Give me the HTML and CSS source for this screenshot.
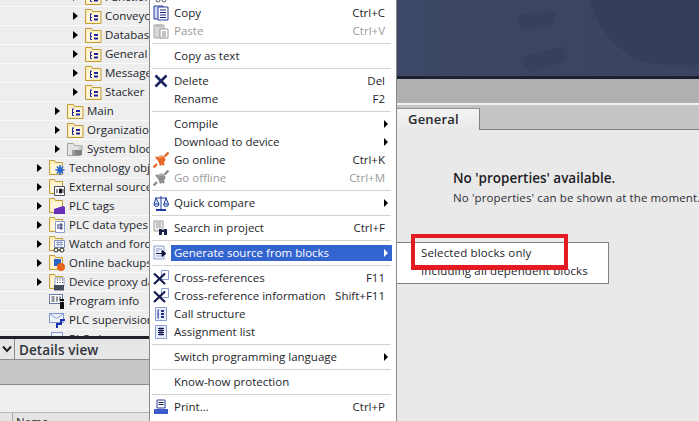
FILE: index.html
```html
<!DOCTYPE html>
<html lang="en">
<head>
<meta charset="utf-8">
<title>Generate source from blocks</title>
<link rel="stylesheet" href="styles.css">
</head>
<body>
<svg class="defs" width="0" height="0" aria-hidden="true">
  <symbol id="fold" viewBox="0 0 17 17">
    <path d="M.5 1.500h6l1 2h8.500v12H.5z" fill="#fdeebd" stroke="#c19b3c"/>
    <path d="M2 5h13v9H2z" fill="#fff6d8"/>
    <path d="M5.500 6v6.500H7M5.500 9.500H7M5 6h2" stroke="#22229c" fill="none"/>
    <rect x="9" y="7" width="4" height="2" fill="#22229c"/><rect x="9" y="10.500" width="4" height="2" fill="#22229c"/>
  </symbol>
  <symbol id="foldg" viewBox="0 0 17 17">
    <path d="M.5 2.500h6l1 2h6v10H.5z" fill="#e2e2e2" stroke="#a3a3a3"/>
    <path d="M5 9h5v6H5z" fill="#9d9d9d"/><rect x="8" y="9" width="7" height="5" fill="#7f7f7f"/><rect x="12" y="4" width="4" height="5" fill="#c4c4c4"/>
  </symbol>
  <symbol id="foldb" viewBox="0 0 17 17">
    <path d="M.5 .5h5l1 2h7v12H.5z" fill="#fdeebd" stroke="#c19b3c"/>
    <path d="M2 5l3-1h8v9H2z" fill="#fff6d8"/>
  </symbol>
  <symbol id="x" viewBox="0 0 14 14">
    <path d="M1.500 1.500 12.500 12.500M12.500 1.500 1.500 12.500" stroke="#1b2360" stroke-width="2.600"/>
  </symbol>
  <symbol id="xdoc" viewBox="0 0 16 16">
    <path d="M8.500 .5h7v9h-7z" fill="#fff" stroke="#8c9ed0"/>
    <path d="M1 3.500 12 14M12 3.500 1 14" stroke="#14194f" stroke-width="2.200"/>
  </symbol>
  <symbol id="plug" viewBox="0 0 16 16">
    <path d="M.5 15.500 4 12M11.500 4.500 15.500 .5" stroke="currentColor" stroke-width="2.400"/>
    <path d="M4 6c2-2 4-3 6-2s3 3 2 5-3 4-5 5z" fill="currentColor"/>
    <path d="M3 5 11 13" stroke="currentColor" stroke-width="2.400"/>
    <path d="M6 6c1.500-1 3-1.500 4-1" stroke="#fff" stroke-opacity=".55" fill="none"/>
  </symbol>
</svg>

<div class="app">
  <aside class="left">
    <div class="tree">
      <div class="row l3"><i class="tri"></i><svg class="ic"><use href="#fold"/></svg><span>Functions</span></div>
      <div class="row l3"><i class="tri"></i><svg class="ic"><use href="#fold"/></svg><span>Conveyor</span></div>
      <div class="row l3"><i class="tri"></i><svg class="ic"><use href="#fold"/></svg><span>Database</span></div>
      <div class="row l3"><i class="tri"></i><svg class="ic"><use href="#fold"/></svg><span>General</span></div>
      <div class="row l3"><i class="tri"></i><svg class="ic"><use href="#fold"/></svg><span>Messages</span></div>
      <div class="row l3"><i class="tri"></i><svg class="ic"><use href="#fold"/></svg><span>Stacker</span></div>
      <div class="row l2"><i class="tri"></i><svg class="ic"><use href="#fold"/></svg><span>Main</span></div>
      <div class="row l2"><i class="tri"></i><svg class="ic"><use href="#fold"/></svg><span>Organization blocks</span></div>
      <div class="row l2"><i class="tri"></i><svg class="ic"><use href="#foldg"/></svg><span>System blocks</span></div>
      <div class="row l1"><i class="tri"></i><svg class="ic" viewBox="0 0 17 17"><use href="#foldb" width="17" height="17"/><path d="M11 5v10M6.500 10h9M8 6.500l6 7M14 6.500l-6 7" stroke="#2a66cf" stroke-width="1.600"/><circle cx="11" cy="10" r="2.500" fill="#2a66cf"/></svg><span>Technology objects</span></div>
      <div class="row l1"><i class="tri"></i><svg class="ic" viewBox="0 0 17 17"><use href="#foldb" width="17" height="17"/><path d="M5.500 7.500h10v9h-10z" fill="#fff" stroke="#4a4f60"/><path d="M8 10v4M10.500 10h2v4h-2zM14 10v4" stroke="#20222c"/></svg><span>External source files</span></div>
      <div class="row l1"><i class="tri"></i><svg class="ic" viewBox="0 0 17 17"><use href="#foldb" width="17" height="17"/><path d="M5 11l9-3 2 1v7H5z" fill="#6a2fb8"/></svg><span>PLC tags</span></div>
      <div class="row l1"><i class="tri"></i><svg class="ic" viewBox="0 0 17 17"><use href="#foldb" width="17" height="17"/><path d="M6.500 4.500h9v11h-9z" fill="#fff" stroke="#8c9ed0"/><path d="M9 7v5M11 7h2v2h-2zM11 10h2v2h-2z" stroke="#2b3270" fill="none"/></svg><span>PLC data types</span></div>
      <div class="row l1"><i class="tri"></i><svg class="ic" viewBox="0 0 17 17"><use href="#foldb" width="17" height="17"/><path d="M5.500 4.500h10v7h-10z" fill="#fff" stroke="#7f8fbf"/><path d="M7 6.500h7M7 8.500h7M9 5v6M12 5v6" stroke="#8c9ed0"/><circle cx="7" cy="14" r="2" fill="#fff" stroke="#222"/><circle cx="13" cy="14" r="2" fill="#fff" stroke="#222"/><path d="M9 14h2" stroke="#222"/></svg><span>Watch and force tables</span></div>
      <div class="row l1"><i class="tri"></i><svg class="ic" viewBox="0 0 17 17"><use href="#foldb" width="17" height="17"/><rect x="5" y="4" width="7" height="7" fill="#2c63c9"/><circle cx="12" cy="12" r="4" fill="#e8641c"/></svg><span>Online backups</span></div>
      <div class="row l1"><i class="tri"></i><svg class="ic" viewBox="0 0 17 17"><use href="#foldb" width="17" height="17"/><path d="M6 4h9v8H6z" fill="#fff" stroke="#8c9ed0"/><path d="M8 6h1M10.500 6h1M13 6h1M8 8.500h1M10.500 8.500h1M13 8.500h1" stroke="#333"/><rect x="5" y="11" width="10" height="5.500" fill="#454c5c"/></svg><span>Device proxy data</span></div>
      <div class="row l1"><i class="tri none"></i>
        <svg class="ic" viewBox="0 0 17 17"><rect x=".5" y="1.500" width="13" height="9" fill="#fff" stroke="#6a78b0"/><path d="M2.500 4h3M2.500 6h3M2.500 8h3M8 3.500v5M11 3.500v5" stroke="#223"/><rect x="11" y="6" width="4" height="2" fill="#111"/><rect x="11" y="9" width="4" height="7" fill="#111"/></svg>
        <span>Program info</span></div>
      <div class="row l1"><i class="tri none"></i>
        <svg class="ic" viewBox="0 0 17 17"><path d="M.5 1.500h14v9H.5z" fill="#eef2fb" stroke="#7f96cf"/><path d="M.5 1.500l7 5 7-5" stroke="#7f96cf" fill="none"/><path d="M8 16v-4h4V8h4" stroke="#1c2fb0" stroke-width="2" fill="none"/></svg>
        <span>PLC supervisions</span></div>
      <div class="row l1"><i class="tri none"></i>
        <svg class="ic" viewBox="0 0 17 17"><path d="M2.500 1.500h11v13h-11z" fill="#eef2fb" stroke="#7f96cf"/></svg>
        <span>PLC alarms</span></div>
    </div>
    <section class="details">
      <header class="dhead">
        <span class="chev"><svg width="10" height="8" viewBox="0 0 10 8"><path d="M1 1.500 5 6l4-4.500" fill="none" stroke="#222" stroke-width="2"/></svg></span>
        <strong>Details view</strong>
      </header>
      <div class="dband"></div>
      <div class="dgap"></div>
      <div class="dtable"><span class="cut"></span><span class="name">Name</span></div>
    </section>
  </aside>

  <main class="right">
    <div class="banner">
      <svg class="mark" viewBox="0 0 302 76" aria-hidden="true">
        <path d="M193 0h110v65h-38c-35-3-62-28-72-65z" fill="#363f59"/>
        <path d="M121 14l38-3-2 13-12 4-22 1z" fill="#37405c"/>
        <path d="M121 58l45-12 3 15-34 12z" fill="#37405c"/>
      </svg>
    </div>
    <div class="band"></div>
    <div class="strip"><span class="tab">General</span></div>
    <div class="props">
      <h2>No 'properties' available.</h2>
      <p>No 'properties' can be shown at the moment.</p>
    </div>
  </main>
</div>

<nav class="menu">
  <div class="item cutrow"><span class="gl"><svg width="16" height="16" viewBox="0 0 16 16"><path d="M6 1 9 10M10 1 7 10" stroke="#5a5a6a"/><circle cx="5" cy="13" r="2" fill="#fff" stroke="#5a5a6a"/><circle cx="11" cy="13" r="2" fill="#fff" stroke="#5a5a6a"/></svg></span><span class="lb">Cut</span></div>
  <div class="item"><span class="gl"><svg width="16" height="16" viewBox="0 0 16 16"><path d="M1 1h9v13H1z" fill="#cfdcf5" stroke="#2c3f97"/><path d="M5 2h10v13H5z" fill="#fff" stroke="#2c3f97"/><path d="M7 5h6M7 7.500h6M7 10h6M7 12.500h6" stroke="#1a237a"/></svg></span><span class="lb">Copy</span><span class="key">Ctrl+C</span></div>
  <div class="item off"><span class="gl"><svg width="16" height="16" viewBox="0 0 16 16"><path d="M1 2h10v13H1z" fill="#d6d6d6" stroke="#a8a8a8"/><path d="M3 1h6v3H3z" fill="#bbb"/><path d="M7 6h8v9H7z" fill="#fff" stroke="#999"/><path d="M9 9h4M9 11h4M9 13h4" stroke="#888"/></svg></span><span class="lb">Paste</span><span class="key">Ctrl+V</span></div>
  <hr>
  <div class="item"><span class="gl"></span><span class="lb">Copy as text</span></div>
  <hr>
  <div class="item"><span class="gl"><svg width="14" height="14"><use href="#x"/></svg></span><span class="lb">Delete</span><span class="key">Del</span></div>
  <div class="item"><span class="gl"></span><span class="lb">Rename</span><span class="key">F2</span></div>
  <hr>
  <div class="item sub"><span class="gl"></span><span class="lb">Compile</span></div>
  <div class="item sub"><span class="gl"></span><span class="lb">Download to device</span></div>
  <div class="item"><span class="gl plug-on"><svg width="16" height="16"><use href="#plug"/></svg></span><span class="lb">Go online</span><span class="key">Ctrl+K</span></div>
  <div class="item off"><span class="gl plug-off"><svg width="16" height="16"><use href="#plug"/></svg></span><span class="lb">Go offline</span><span class="key">Ctrl+M</span></div>
  <hr>
  <div class="item sub"><span class="gl"><svg width="16" height="16" viewBox="0 0 16 16"><path d="M8 1v13M2 3h12M3 3 1 9h5zM13 3l-2 6h4.500zM1 9a2.500 2.500 0 0 0 5 0M10.500 9a2.500 2.500 0 0 0 5 0" fill="#dbe6f8" stroke="#1c3f9e"/><path d="M3 15h10" stroke="#1c3f9e" stroke-width="2"/></svg></span><span class="lb">Quick compare</span></div>
  <hr>
  <div class="item"><span class="gl"><svg width="16" height="16" viewBox="0 0 16 16"><path d="M1 1h9v10H1z" fill="#eee" stroke="#999"/><path d="M3 3h5M3 5h5M3 7h5" stroke="#999"/><path d="M6 9h3v6H6zM11 9h3v6h-3z" fill="#1a2148"/><path d="M9 11h2" stroke="#1a2148" stroke-width="2"/></svg></span><span class="lb">Search in project</span><span class="key">Ctrl+F</span></div>
  <hr>
  <div class="item sub active"><span class="gl"><svg width="16" height="16" viewBox="0 0 16 16"><path d="M1 1h10v13H1z" fill="#eef2fb" stroke="#8c9ed0"/><path d="M3 4h6M3 6h3M3 11h5" stroke="#8c9ed0"/><path d="M3 8.500h8M9 5.500 13 8.500 9 11.500z" fill="#11163f" stroke="#11163f"/></svg></span><span class="lb">Generate source from blocks</span></div>
  <hr>
  <div class="item"><span class="gl"><svg width="16" height="16"><use href="#xdoc"/></svg></span><span class="lb">Cross-references</span><span class="key">F11</span></div>
  <div class="item"><span class="gl"><svg width="16" height="16"><use href="#xdoc"/></svg></span><span class="lb">Cross-reference information</span><span class="key">Shift+F11</span></div>
  <div class="item"><span class="gl"><svg width="16" height="16" viewBox="0 0 16 16"><path d="M2.500 1.500h11v13h-11z" fill="#e8eefb" stroke="#8c9ed0"/><path d="M6 4H5v8h1M5 8h1" stroke="#1f2f9a" fill="none"/><path d="M8 4h3v2H8zM8 7h3v2H8zM8 10h3v2H8z" fill="#1f2f9a"/></svg></span><span class="lb">Call structure</span></div>
  <div class="item"><span class="gl"><svg width="16" height="16" viewBox="0 0 16 16"><path d="M2.500 1.500h11v13h-11z" fill="#e8eefb" stroke="#8c9ed0"/><path d="M5 4.500h6M5 6.500h6M5 8.500h6M5 10.500h6M7 3.500v8M9 3.500v8" stroke="#14194f"/></svg></span><span class="lb">Assignment list</span></div>
  <hr>
  <div class="item sub"><span class="gl"></span><span class="lb">Switch programming language</span></div>
  <hr>
  <div class="item"><span class="gl"></span><span class="lb">Know-how protection</span></div>
  <hr>
  <div class="item"><span class="gl"><svg width="16" height="16" viewBox="0 0 16 16"><path d="M4 1h8v8H4z" fill="#fff" stroke="#2c3f97"/><path d="M5.500 3.500h5M5.500 5.500h5" stroke="#14194f"/><path d="M1 10h14v5H1z" fill="#3b5cc8"/></svg></span><span class="lb">Print...</span><span class="key">Ctrl+P</span></div>
</nav>

<div class="submenu">
  <div class="opt">Selected blocks only</div>
  <div class="opt">Including all dependent blocks</div>
</div>
<div class="callout"></div>
</body>
</html>
```

FILE: styles.css
```css
* { box-sizing: border-box; }
html, body { margin: 0; height: 100%; overflow: hidden; }
body {
  position: relative;
  width: 699px;
  height: 421px;
  font: 11.500px/18px "Open Sans", "DejaVu Sans", sans-serif;
  color: #24262c;
  background: #e9e9e9;
}
.defs { position: absolute; }
.app { display: flex; height: 421px; }

/* left: project tree */
.left { width: 150px; flex: none; display: flex; flex-direction: column; overflow: hidden; background: #efefef; }
.tree { height: 336px; overflow: hidden; flex: none; }
.row {
  display: flex; align-items: center; height: 19px; white-space: nowrap;
  border-bottom: 1px solid #fafafa; background: #eeeeee;
}
.row:first-child { margin-top: -12px; }
.l1 { padding-left: 37px; }
.l2 { padding-left: 55px; }
.l3 { padding-left: 73px; }
.tri { width: 0; height: 0; flex: none; border-left: 5px solid #000; border-top: 4.500px solid transparent; border-bottom: 4.500px solid transparent; margin-right: 7px; }
.tri.none { border-left-color: transparent; }
.ic { width: 17px; height: 17px; flex: none; margin-right: 3px; }

.details { flex: 1; display: flex; flex-direction: column; background: #efefef; }
.dhead {
  display: flex; align-items: stretch; flex: none; height: 24px;
  border-top: 3px solid #20222a; border-bottom: 1px solid #8c8c8c; background: #e6e6e6;
}
.chev { width: 15px; display: flex; align-items: center; justify-content: center; border-right: 1px solid #8c8c8c; }
.dhead strong { font-size: 13.500px; line-height: 22px; padding-left: 4px; font-weight: 600; letter-spacing: .1px; color: #30333c; }
.dband { height: 25px; flex: none; background: #c6c6c6; border-bottom: 1px solid #8c8c8c; }
.dgap { height: 27px; flex: none; background: #efefef; }
.dtable { flex: 1; display: flex; border-top: 1px solid #b5b5b5; background: #e4e4e4; }
.cut { width: 13px; border-right: 1px solid #aaa; }
.name { padding-left: 3px; }

/* right */
.right { flex: 1; display: flex; flex-direction: column; padding-left: 247px; }
.banner { position: relative; height: 79px; flex: none; background: linear-gradient(90deg, #3d4866, #3a4460); border-bottom: 3px solid #1c2030; overflow: hidden; }
.mark { display: block; width: 302px; height: 76px; }
.band { height: 26px; flex: none; background: #b0b0b0; border-bottom: 2px solid #f0f0f0; }
.strip { height: 25px; flex: none; padding-top: 3px; background: #c4c4c4; border-bottom: 1px solid #808080; }
.tab {
  display: block; width: 83px; height: 22px; padding-left: 11px;
  background: linear-gradient(#f4f4f4, #e9e9e9); border-top: 1px solid #909090; border-right: 1px solid #808080;
  font-weight: 600; font-size: 13px; letter-spacing: .2px; line-height: 20px; color: #25282e;
}
.props { flex: 1; background: #e9e9e9; padding: 38px 0 0 56px; white-space: nowrap; overflow: hidden; }
.props h2 { margin: 0; font-size: 13.500px; font-weight: 600; line-height: 20px; color: #1e2026; }
.props p { margin: 1px 0 0; line-height: 18px; letter-spacing: .12px; color: #2c2e36; }

/* context menu */
.menu {
  position: absolute; left: 149px; top: -14px; width: 248px; height: 440px; overflow: hidden;
  background: #fff; border-left: 1px solid #8a8a8a; border-right: 1px solid #8a8a8a;
  padding: 0 3px 0 1px;
}
.item { display: flex; align-items: center; height: 18px; white-space: nowrap; position: relative; }
.gl { width: 20px; height: 18px; flex: none; display: flex; align-items: center; justify-content: center; }
.cutrow .lb { line-height: 10px; align-self: flex-start; }
.lb { flex: 1; padding-left: 3px; }
.key { padding-right: 8px; }
.off { color: #9b9b9b; }
.plug-on { color: #e8682a; }
.plug-off { color: #8e8e8e; }
.sub::after {
  content: ""; position: absolute; right: 5px; top: 5px; width: 0; height: 0;
  border-left: 4px solid #000; border-top: 4px solid transparent; border-bottom: 4px solid transparent;
}
.active .lb { background: #3364cf; color: #fff; height: 16px; line-height: 15px; margin-right: 1px; }
.active::after { border-left-color: #fff; }
.menu hr { height: 1px; border: 0; background: #d2d2d2; margin: 3px 2px 3px 1px; }

.submenu {
  position: absolute; left: 397px; top: 242px; width: 212px; height: 42px;
  background: #fff; border: 1px solid #808080; border-left: 0; padding: 1px 0 0 24px;
  letter-spacing: .14px;
}
.opt { height: 18px; white-space: nowrap; }
.callout { position: absolute; left: 411px; top: 234px; width: 157px; height: 36px; border: 4px solid #e51b24; border-bottom-width: 5px; }
```
